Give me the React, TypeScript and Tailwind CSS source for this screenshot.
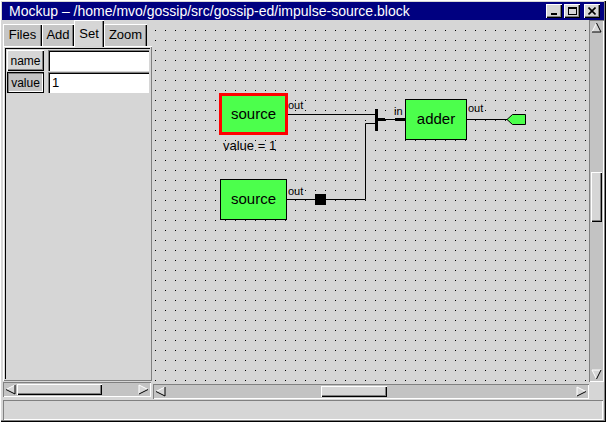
import React from 'react';

const raised = "shadow-[inset_1px_1px_0_#ffffff,inset_-1px_-1px_0_#000000,inset_-2px_-2px_0_#808080]";
const raisedSoft = "shadow-[inset_1px_1px_0_#ffffff,inset_-1px_-1px_0_#808080]";
const sunken = "shadow-[inset_1px_1px_0_#808080,inset_-1px_-1px_0_#ffffff]";
const sunkenDeep = "shadow-[inset_1px_1px_0_#808080,inset_2px_2px_0_#000000,inset_-1px_-1px_0_#ffffff]";

const Arrow = ({ dir }: { dir: 'left' | 'right' | 'up' | 'down' }) => {
  const pts = {
    left: { p: "10,1 1,5.5 10,10", light: "M1 5.5 L10 1", dark: "M1 5.5 L10 10 L10 1" },
    right: { p: "1,1 10,5.5 1,10", light: "M1 10 L1 1 L10 5.5", dark: "M10 5.5 L1 10" },
    up: { p: "1,10 5.5,1 10,10", light: "M1 10 L5.5 1", dark: "M5.5 1 L10 10 L1 10" },
    down: { p: "1,1 10,1 5.5,10", light: "M5.5 10 L1 1 L10 1", dark: "M10 1 L5.5 10" },
  }[dir];
  return (
    <svg width="11" height="11" viewBox="0 0 11 11" className="shrink-0">
      <polygon points={pts.p} fill="#d6d6d6" />
      <path d={pts.light} stroke="#ffffff" strokeWidth="1" fill="none" />
      <path d={pts.dark} stroke="#000000" strokeWidth="1" fill="none" />
    </svg>
  );
};

const HScroll = ({ className, thumb }: { className: string; thumb: string }) => (
  <div className={`h-[15px] bg-[#c3c3c3] ${sunken} flex items-center px-[2px] ${className}`}>
    <Arrow dir="left" />
    <div className="relative flex-1 h-full">
      <div className={`absolute top-[2px] bottom-[2px] bg-[#d6d6d6] ${raised} ${thumb}`} />
    </div>
    <Arrow dir="right" />
  </div>
);

const TitleButton = ({ children }: { children: React.ReactNode }) => (
  <div className={`w-[16px] h-[14px] bg-[#d6d6d6] ${raised} flex items-center justify-center`}>
    {children}
  </div>
);

const Tab = ({ label, width, active }: { label: string; width: string; active?: boolean }) => (
  <div
    className={`${width} ${active ? 'h-[27px] bg-[#d6d6d6] -mb-[1px] z-10' : 'h-[22px] bg-[#c6c6c6]'} shadow-[inset_1px_1px_0_#ffffff,inset_-1px_0_0_#000000,inset_-2px_0_0_#808080] flex items-center justify-center text-[13px] text-black`}
  >
    {label}
  </div>
);

const Field = ({ label, value, pressed }: { label: string; value: string; pressed?: boolean }) => (
  <div className="flex items-stretch h-[21px] gap-[4px]">
    <div
      className={`w-[37px] flex items-center justify-center text-[12px] ${pressed ? 'bg-[#c3c3c3] shadow-[inset_0_0_0_1px_#000000,inset_2px_2px_0_#808080,inset_-2px_-2px_0_#ffffff]' : `bg-[#d6d6d6] ${raised}`}`}
    >
      {label}
    </div>
    <div className={`flex-1 bg-white ${sunkenDeep} flex items-center pl-[4px] text-[13px]`}>{value}</div>
  </div>
);

const Label = ({ text, className }: { text: string; className: string }) => (
  <div className={`absolute text-[11px] leading-none text-black ${className}`}>{text}</div>
);

const Canvas = () => (
  <div className="relative flex-1 h-full overflow-hidden bg-[#d6d6d6]">
    <svg className="absolute inset-0" width="436" height="363">
      <defs>
        <pattern id="grid" x="2" y="0" width="10" height="10" patternUnits="userSpaceOnUse">
          <rect x="0" y="0" width="1" height="1" fill="#000000" />
        </pattern>
      </defs>
      <rect x="0" y="1" width="436" height="362" fill="url(#grid)" />
      {/* wires */}
      <line x1="134" y1="94.5" x2="222" y2="94.5" stroke="#000" strokeWidth="1" />
      <polyline points="133,179.5 212.5,179.5 212.5,103.5 222,103.5" stroke="#000" strokeWidth="1" fill="none" />
      <rect x="162" y="174" width="11" height="11" fill="#000" />
      <rect x="222" y="89" width="3" height="22" fill="#000" />
      <rect x="225" y="98" width="7" height="3" fill="#000" />
      <line x1="231" y1="99.5" x2="242" y2="99.5" stroke="#000" strokeWidth="1" />
      <rect x="242" y="98" width="10" height="3" fill="#000" />
      <line x1="313" y1="99.5" x2="354" y2="99.5" stroke="#000" strokeWidth="1" />
      <polygon points="354,99.5 359.5,94.5 372.5,94.5 372.5,104.5 359.5,104.5" fill="#4cff4c" stroke="#000" strokeWidth="1" />
    </svg>

    <div className="absolute left-[66px] top-[73px] w-[69px] h-[42px] bg-[#4cff4c] border-[3px] border-[#ff0000] flex items-center justify-center text-[15px]">
      source
    </div>
    <Label text="out" className="left-[135px] top-[80px]" />
    <div className="absolute left-[70px] top-[119px] text-[13px] leading-none">value = 1</div>

    <div className="absolute left-[67px] top-[159px] w-[67px] h-[41px] bg-[#4cff4c] border border-black flex items-center justify-center text-[15px]">
      source
    </div>
    <Label text="out" className="left-[135px] top-[166px]" />

    <div className="absolute left-[252px] top-[79px] w-[62px] h-[41px] bg-[#4cff4c] border border-black flex items-center justify-center text-[15px]">
      adder
    </div>
    <Label text="in" className="left-[241px] top-[86px]" />
    <Label text="out" className="left-[315px] top-[83px]" />
  </div>
);

export default function App() {
  return (
    <div
      className={`w-[606px] h-[422px] bg-[#d6d6d6] ${raised} p-[2px] flex flex-col text-black overflow-hidden`}
      style={{ fontFamily: '"Liberation Sans", Arial, sans-serif' }}
    >
      {/* title bar */}
      <div className="h-[18px] bg-[#000080] flex items-center pl-[7px] pr-[4px] shrink-0">
        <span className="text-white text-[14px] leading-none flex-1 whitespace-nowrap">
          Mockup – /home/mvo/gossip/src/gossip-ed/impulse-source.block
        </span>
        <div className="flex gap-[2px]">
          <TitleButton>
            <div className="w-[6px] h-[2px] bg-black mt-[6px]" />
          </TitleButton>
          <TitleButton>
            <div className="w-[9px] h-[8px] border border-black border-t-2" />
          </TitleButton>
          <div className="ml-[2px]">
            <TitleButton>
              <svg width="8" height="8" viewBox="0 0 8 8">
                <path d="M0.5 0.5 L7.5 7.5 M7.5 0.5 L0.5 7.5" stroke="#000" strokeWidth="1.6" />
              </svg>
            </TitleButton>
          </div>
        </div>
      </div>

      {/* body */}
      <div className="flex flex-1 min-h-0">
        {/* left column */}
        <div className="w-[150px] flex flex-col pl-[1px]">
          <div className="h-[26px] flex items-end shrink-0">
            <Tab label="Files" width="w-[39px]" />
            <Tab label="Add" width="w-[32px]" />
            <Tab label="Set" width="w-[30px]" active />
            <Tab label="Zoom" width="w-[43px]" />
          </div>
          <div className={`h-[335px] ${raisedSoft} p-[2px]`}>
            <div className="h-full shadow-[inset_1px_1px_0_#000000] pt-[2px] pl-[2px] pr-[1px] flex flex-col gap-[1px]">
              <Field label="name" value="" />
              <Field label="value" value="1" pressed />
            </div>
          </div>
          <HScroll className="mt-[1px] mr-[1px]" thumb="left-[1px] w-[85px]" />
        </div>

        {/* right column */}
        <div className="flex-1 flex flex-col pl-[1px]">
          <div className="h-[363px] flex">
            <Canvas />
            <div className={`w-[15px] bg-[#c3c3c3] ${sunken} flex flex-col items-center py-[2px]`}>
              <Arrow dir="up" />
              <div className="relative flex-1 w-full">
                <div className={`absolute left-[2px] right-[2px] top-[139px] h-[50px] bg-[#d6d6d6] ${raised}`} />
              </div>
              <Arrow dir="down" />
            </div>
          </div>
          <HScroll className="mt-[2px] mr-[15px]" thumb="left-[155px] w-[66px]" />
        </div>
      </div>

      {/* status bar */}
      <div className={`h-[20px] mt-[1px] mx-[1px] shrink-0 ${sunken}`} />
    </div>
  );
}
